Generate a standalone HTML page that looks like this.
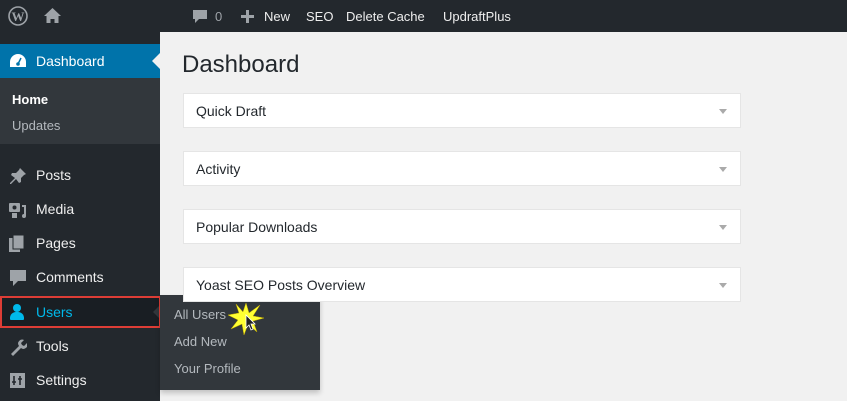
<!DOCTYPE html>
<html><head><style>
*{margin:0;padding:0;box-sizing:border-box}
body{width:847px;height:401px;overflow:hidden;background:#f1f1f1;font-family:"Liberation Sans",sans-serif;position:relative}
#bar{position:absolute;left:0;top:0;width:847px;height:32px;background:#23282d;color:#eee;font-size:13px}
#bar span{position:absolute;top:9px}
#side{position:absolute;left:0;top:32px;width:160px;height:369px;background:#23282d}
.mi{position:absolute;left:0;width:160px;height:34px;color:#eee;font-size:14px}
.mi .t{position:absolute;left:36px;top:9px}
.mi svg{position:absolute;left:9px;top:9px}
.box{position:absolute;left:183px;width:558px;height:35px;background:#fff;border:1px solid #e5e5e5;font-size:14px;color:#23282d}
.box .t{position:absolute;left:12px;top:9px}
.box .a{position:absolute;right:13px;top:15px;border-left:4px solid transparent;border-right:4px solid transparent;border-top:5px solid #aaa}
</style></head><body>
<div id="bar">
<svg style="position:absolute;left:8px;top:6px" width="20" height="20"><circle cx="10" cy="10" r="9" fill="none" stroke="#9ea3a8" stroke-width="1.6"/><text x="10" y="15" font-size="13" text-anchor="middle" fill="#9ea3a8" font-family="Liberation Serif" font-weight="bold">W</text></svg>
<svg style="position:absolute;left:44px;top:8px" width="17" height="15"><path d="M8.5 0L0 8h2.5v7h4v-4h4v4h4V8H17z" fill="#9ea3a8"/></svg>
<svg style="position:absolute;left:192px;top:9px" width="16" height="16"><path d="M1 1h14v9H7l-4 4v-4H1z" fill="#9ea3a8"/></svg>
<span style="left:215px;color:#9ea3a8">0</span>
<svg style="position:absolute;left:241px;top:10px" width="13" height="13"><path d="M5 0h3v5h5v3H8v5H5V8H0V5h5z" fill="#9ea3a8"/></svg>
<span style="left:264px">New</span><span style="left:306px">SEO</span><span style="left:346px">Delete Cache</span><span style="left:443px">UpdraftPlus</span>
</div>
<div id="side">
<div class="mi" style="top:12px;background:#0073aa;color:#fff"><svg width="18" height="16"><path d="M9 1a8 8 0 0 0-8 8v5h16V9a8 8 0 0 0-8-8z" fill="#fff"/><circle cx="9" cy="11" r="1.8" fill="#0073aa"/><path d="M9 11L12 5" stroke="#0073aa" stroke-width="1.5"/></svg><span class="t">Dashboard</span>
<div style="position:absolute;right:0;top:9px;border-top:8px solid transparent;border-bottom:8px solid transparent;border-right:8px solid #f1f1f1"></div></div>
<div style="position:absolute;top:46px;left:0;width:160px;height:66px;background:#32373c;font-size:13px">
<div style="position:absolute;left:12px;top:14px;color:#fff;font-weight:bold">Home</div>
<div style="position:absolute;left:12px;top:40px;color:#b4b9be">Updates</div></div>
<div class="mi" style="top:126px"><svg width="18" height="18"><path d="M11 1l6 6-2 1-3 3 0 4-2 1-3-4-5 5-1 0 0-1 5-5-4-3 1-2 4 0 3-3z" fill="#9ea3a8"/></svg><span class="t">Posts</span></div>
<div class="mi" style="top:160px"><svg width="18" height="18"><rect x="0" y="2" width="11" height="9" rx="1" fill="#9ea3a8"/><circle cx="5.5" cy="6.5" r="2" fill="#23282d"/><rect x="3" y="12" width="5" height="5" fill="#9ea3a8"/><path d="M13 4h4v11a2 2 0 1 1-2-2V6h-2z" fill="#9ea3a8"/></svg><span class="t">Media</span></div>
<div class="mi" style="top:194px"><svg width="18" height="18"><rect x="0" y="3" width="11" height="14" fill="#9ea3a8"/><rect x="4" y="0" width="11" height="14" fill="#9ea3a8" stroke="#23282d" stroke-width="1"/></svg><span class="t">Pages</span></div>
<div class="mi" style="top:228px"><svg width="18" height="18"><path d="M1 1h16v11H9l-5 5v-5H1z" fill="#9ea3a8"/></svg><span class="t">Comments</span></div>
<div class="mi" style="top:264px;height:32px;background:#191e23;border:2px solid #dd3d36;color:#00b9eb;width:161px"><div style="position:absolute;left:11px;top:6px;width:8px;height:8px;border-radius:50%;background:#00b9eb"></div><div style="position:absolute;left:8px;top:14px;width:14px;height:8px;border-radius:6px 6px 1px 1px;background:#00b9eb"></div><span class="t" style="left:34px;top:6px">Users</span>
<div style="position:absolute;right:0;top:8px;border-top:6px solid transparent;border-bottom:6px solid transparent;border-right:6px solid #32373c"></div></div>
<div class="mi" style="top:297px"><svg width="18" height="18"><path d="M2 16l8-8a4 4 0 0 1 5-6l-3 3 1 2 2 1 3-3a4 4 0 0 1-6 5l-8 8z" fill="#9ea3a8"/></svg><span class="t">Tools</span></div>
<div class="mi" style="top:331px"><svg width="18" height="18"><rect x="1" y="1" width="15" height="15" fill="#9ea3a8"/><path d="M5 4v9M3 10h4M11 4v9M9 7h4" stroke="#23282d" stroke-width="1.6"/></svg><span class="t">Settings</span></div>
</div>
<div style="position:absolute;left:160px;top:295px;width:160px;height:95px;background:#32373c;box-shadow:0 3px 5px rgba(0,0,0,.2);font-size:13px;color:#b4b9be">
<div style="position:absolute;left:14px;top:12px">All Users</div>
<div style="position:absolute;left:14px;top:39px">Add New</div>
<div style="position:absolute;left:14px;top:66px">Your Profile</div>
<svg style="position:absolute;left:66px;top:6px" width="40" height="36"><polygon points="20,2 23,12 34,4 27,15 38,17 27,20 31,31 22,23 18,34 16,23 5,28 12,19 2,14 13,12 10,3 17,11" fill="#ffff33" stroke="#c8b000" stroke-width=".5"/><path d="M20 14v13l3-3 2 5 2-1-2-5h4z" fill="#222" stroke="#fff" stroke-width=".8"/></svg>
</div>
<div style="position:absolute;left:182px;top:51px;font-size:24px;color:#23282d">Dashboard</div>
<div class="box" style="top:93px"><span class="t">Quick Draft</span><i class="a"></i></div>
<div class="box" style="top:151px"><span class="t">Activity</span><i class="a"></i></div>
<div class="box" style="top:209px"><span class="t">Popular Downloads</span><i class="a"></i></div>
<div class="box" style="top:267px"><span class="t">Yoast SEO Posts Overview</span><i class="a"></i></div>
</body></html>
